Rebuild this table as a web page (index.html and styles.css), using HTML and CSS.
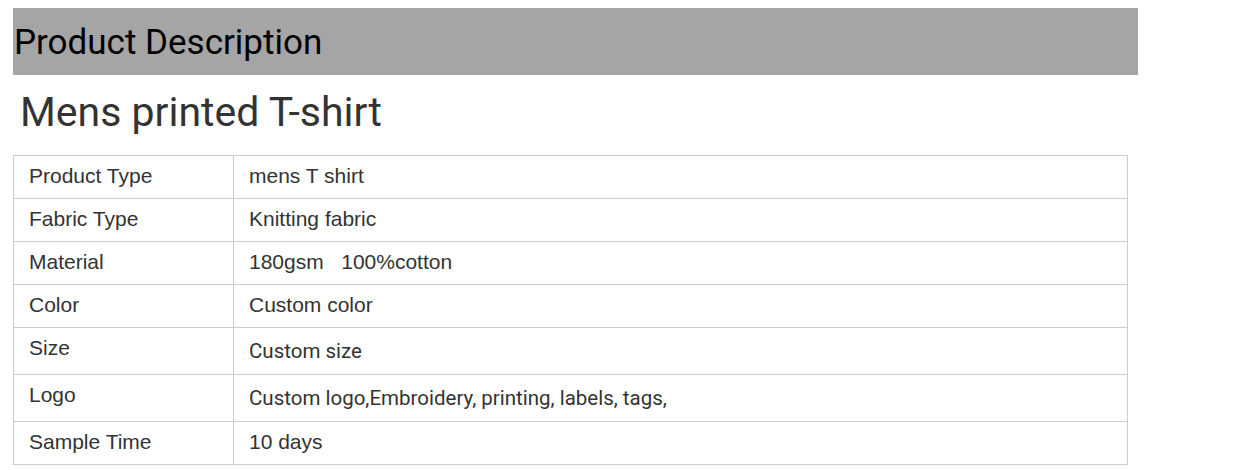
FILE: index.html
```html
<!DOCTYPE html>
<html>
<head>
<meta charset="utf-8">
<link rel="stylesheet" href="styles.css">
</head>
<body>
<div class="wrap">
  <h2 class="bar">Product Description</h2>
  <h1 class="title">Mens printed T-shirt</h1>
  <table class="spec">
    <tr><td class="k">Product Type</td><td class="v">mens T shirt</td></tr>
    <tr><td class="k">Fabric Type</td><td class="v">Knitting fabric</td></tr>
    <tr><td class="k">Material</td><td class="v">180gsm&nbsp;&nbsp;&nbsp;100%cotton</td></tr>
    <tr><td class="k">Color</td><td class="v">Custom color</td></tr>
    <tr class="tall"><td class="k">Size</td><td class="v rb">Custom size</td></tr>
    <tr class="tall"><td class="k">Logo</td><td class="v rb">Custom logo,Embroidery, printing, labels, tags,</td></tr>
    <tr><td class="k">Sample Time</td><td class="v">10 days</td></tr>
  </table>
</div>
</body>
</html>
```
FILE: styles.css
```css
html, body { margin: 0; padding: 0; background: #fff; }
body { padding: 8px; }
.wrap { padding-left: 5px; width: 1125px; }
.bar {
  margin: 0;
  background: #a5a5a5;
  color: #000;
  font-family: Roboto, sans-serif;
  font-weight: 400;
  font-size: 35px;
  line-height: 65px;
  height: 65px;
  padding: 2px 0 0 1px;
}
.title {
  margin: 12px 0 0 7px;
  font-family: Roboto, sans-serif;
  font-weight: 400;
  font-size: 41px;
  line-height: 50px;
  color: #333;
  height: 68px;
}
.spec {
  border-collapse: collapse;
  width: 1115px;
  font-family: "Liberation Sans", Arial, sans-serif;
  font-size: 21px;
  color: #333;
}
.spec td {
  border: 1px solid #ccc;
  height: 40px;
  padding: 0 15px 2px;
  vertical-align: middle;
}
.spec td.k { width: 189px; }
.spec tr.tall td.k { height: 40px; padding-bottom: 6px; }
.spec tr.tall td.rb { height: 46px; padding-top: 0; padding-bottom: 0; }
.spec td.rb { font-family: Roboto, sans-serif; font-size: 20.5px; }
```
